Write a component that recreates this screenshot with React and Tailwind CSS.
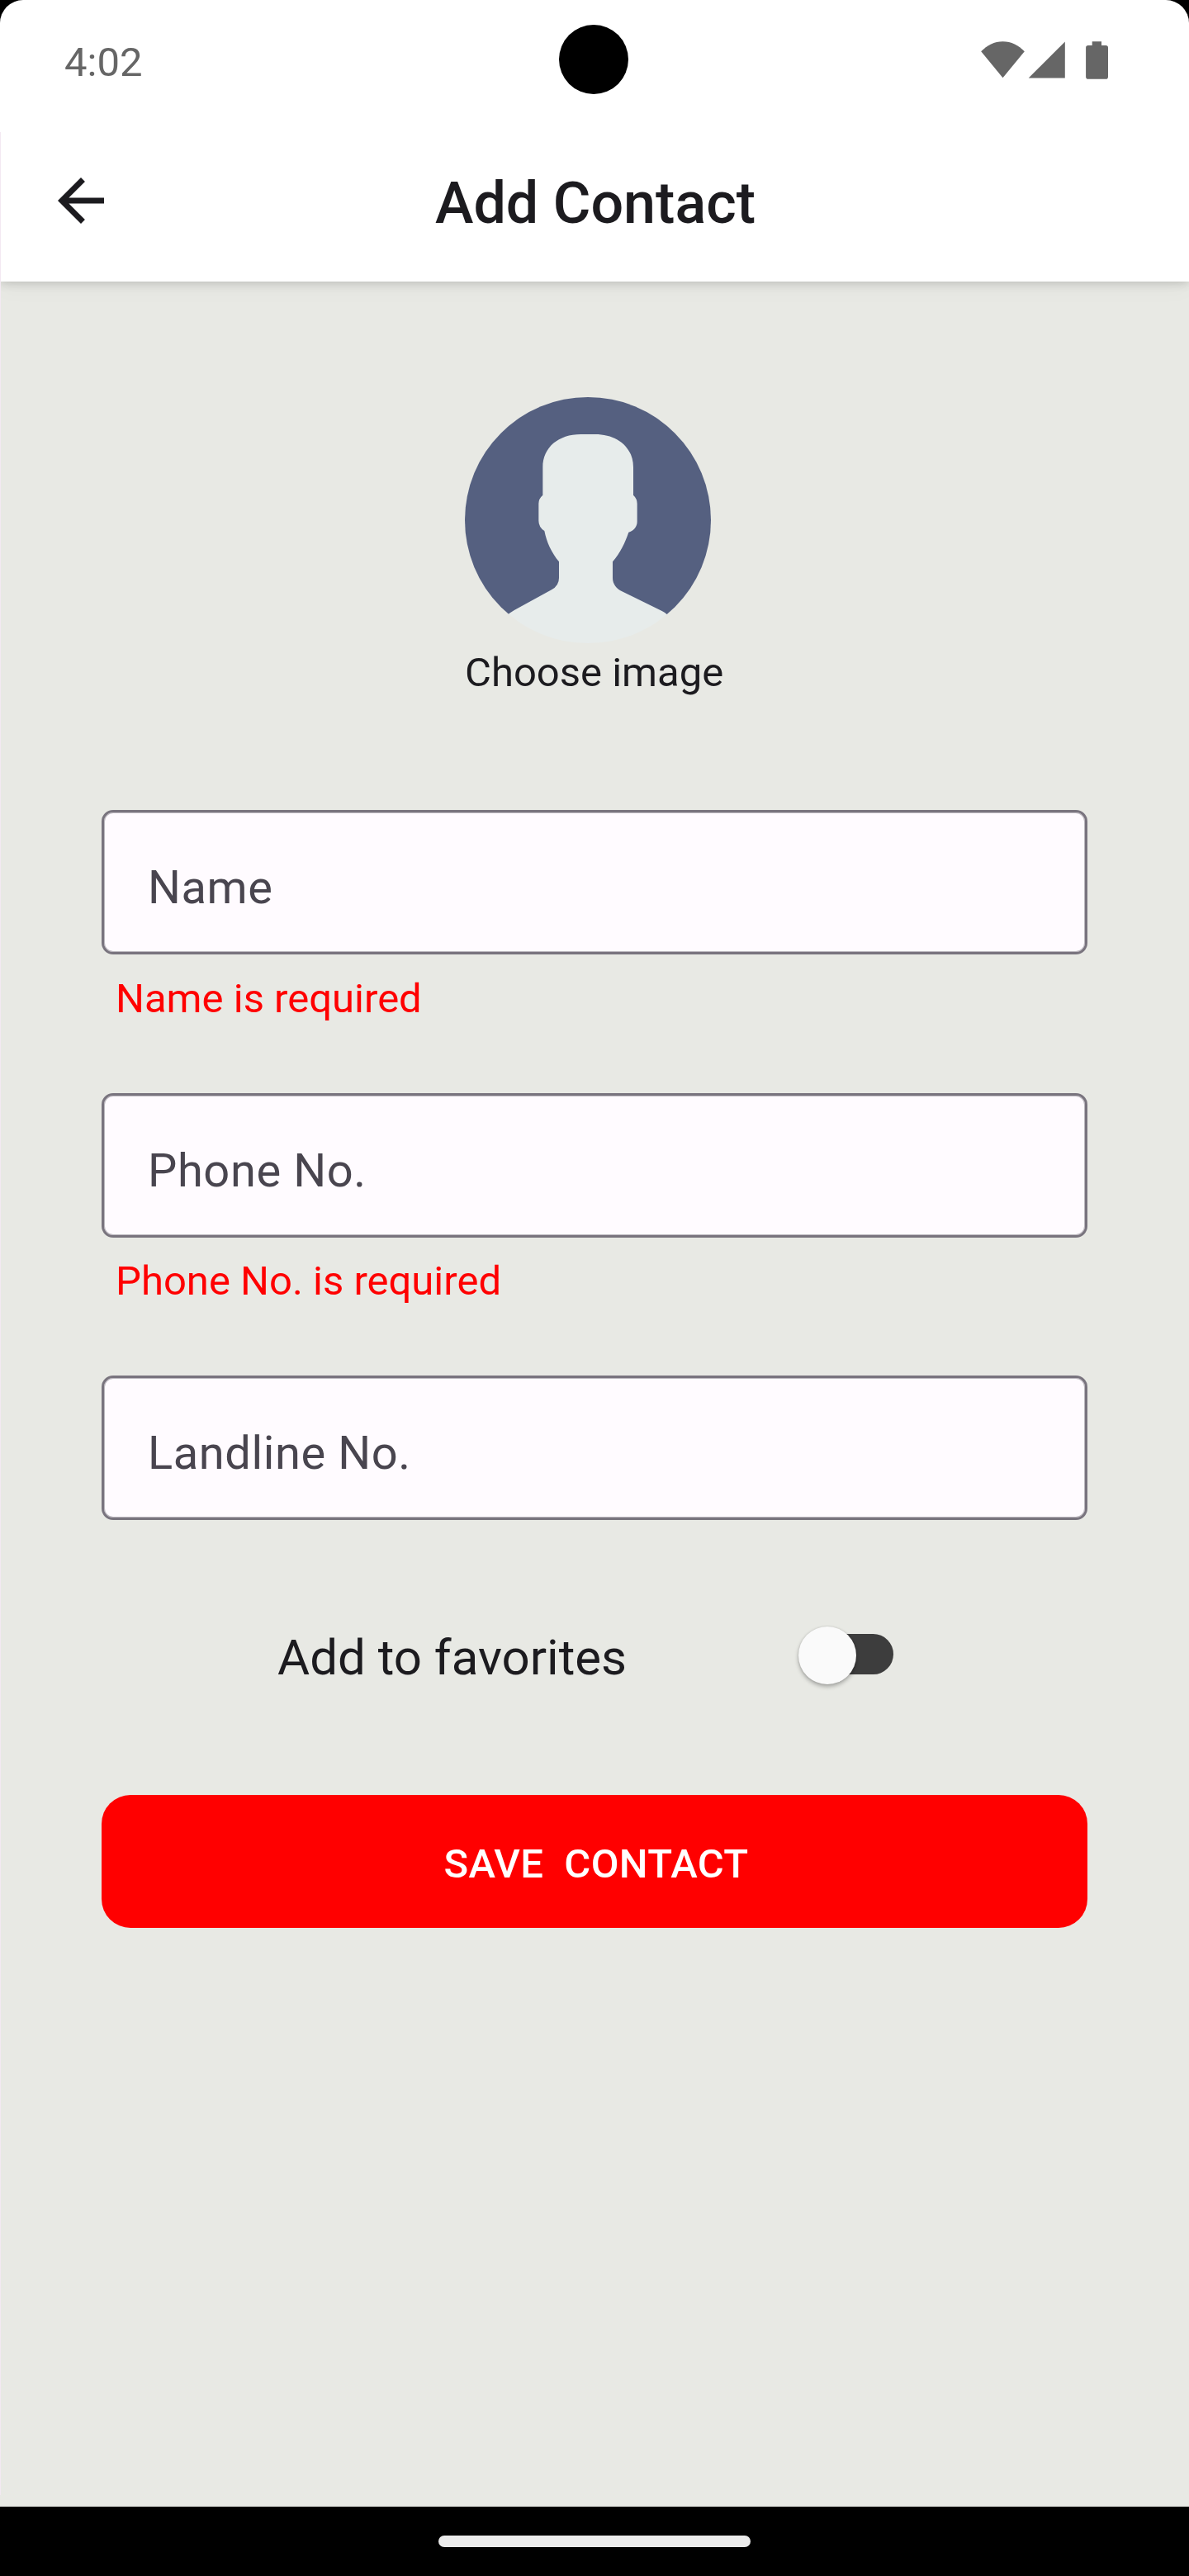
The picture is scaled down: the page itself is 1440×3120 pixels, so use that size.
function StatusBar() {
  return (
    <div className="flex h-[144px] items-start">
      <span className="mt-[47px] ml-[78px] w-[599px] text-[49px] leading-[57px] text-[#666666]">4:02</span>
      <span className="mt-[30px] size-[84px] rounded-full bg-black" />
      <svg className="mt-[48px] ml-[423px]" width="164" height="50" viewBox="1184 48 164 50" fill="#666666">
        <path d="M1214.5 94.3 1188.2 62.3C1195.4 54.7 1204.4 50.2 1214.5 50.2S1233.6 54.7 1240.8 62.3Z" />
        <path d="M1245.7 94.5 1289.8 50.4V94.5Z" />
        <path d="M1322.7 50.2H1334V55H1339.2A2.8 2.8 0 0 1 1342 57.8V92.9A2.8 2.8 0 0 1 1339.2 95.7H1317.9A2.8 2.8 0 0 1 1315.1 92.9V57.8A2.8 2.8 0 0 1 1317.9 55H1322.7Z" />
      </svg>
    </div>
  );
}

function AppBar() {
  return (
    <div className="grid h-[197px] grid-cols-[1fr_auto_1fr] items-start">
      <button className="mt-[57px] ml-[56px] size-[84px]" aria-label="Back">
        <svg width="84" height="84" viewBox="0 0 24 24" fill="#1c1b1f">
          <path d="M20 11H7.83l5.59-5.59L12 4l-8 8 8 8 1.41-1.41L7.83 13H20v-2z" />
        </svg>
      </button>
      <h1 className="mt-[61px] pl-[2px] text-[70px] leading-[82px] font-medium whitespace-nowrap text-[#1c1b1f]">Add Contact</h1>
      <span />
    </div>
  );
}

function Avatar() {
  return (
    <svg className="block size-[298px]" viewBox="69 63 894 894">
      <defs>
        <clipPath id="avatar-circle">
          <circle cx="516" cy="510" r="447" />
        </clipPath>
      </defs>
      <g clipPath="url(#avatar-circle)">
        <rect x="69" y="63" width="894" height="789" fill="#556080" />
        <path
          fill="#e7eceb"
          d="M352 419V318C352 245 410 198 490 198H542C622 198 681 245 681 318V419Q695 432 695 450V516C695 535 680 550 664 554C652 590 634 628 606 661V720C606 742 620 760 640 769L785 840Q795 845 802 851L900 957H130L229 850Q235 845 250 836L384 763Q411 748 411 720V661C384 628 366 590 358 549Q337 535 337 512V450Q337 432 352 419Z"
        />
      </g>
    </svg>
  );
}

function Field({ label }) {
  return (
    <input
      className="block h-[175px] w-full rounded-[14px] border-3 border-[#79747e] bg-[#fffbff] pt-[13px] pl-[53px] text-[56px] leading-[66px] tracking-[0.6px] text-[#1c1b1f] shadow-[inset_0_0_0_1px_#bcb8bf] outline-none placeholder:text-[#49454f] placeholder:opacity-100"
      placeholder={label}
    />
  );
}

function ErrorText({ children }) {
  return <p className="pl-[17px] text-[49px] leading-[57px] text-[#ff0000]">{children}</p>;
}

function Switch() {
  return (
    <button className="flex h-[70px] w-[116px] items-start" role="switch" aria-checked="false" aria-label="Add to favorites">
      <span className="z-10 size-[70px] shrink-0 rounded-full bg-[#fafafa] shadow-[0_3px_5px_rgba(0,0,0,0.28),0_0_3px_rgba(0,0,0,0.12)]" />
      <span className="mt-[9px] -ml-[60px] h-[49px] w-[105px] shrink-0 rounded-full bg-[#3d3d3d]" />
    </button>
  );
}

export default function App() {
  return (
    <div className="flex h-[3120px] w-[1440px] flex-col overflow-hidden bg-black font-['Roboto',sans-serif]">
      <header className="relative z-10 rounded-t-[28px] bg-white shadow-[0_2px_12px_rgba(0,0,0,0.17),0_6px_30px_rgba(0,0,0,0.04)]">
        <StatusBar />
        <AppBar />
      </header>

      <main className="h-[2695px] bg-[#e8e9e4] px-[123px] pt-[140px]">
        <div className="mx-auto flex w-[314px] flex-col gap-[7px]">
          <Avatar />
          <p className="text-[49px] leading-[57px] whitespace-nowrap text-[#1c1b1f]">Choose image</p>
        </div>

        <form className="mt-[138px] flex flex-col">
          <div className="flex flex-col gap-[25px]">
            <Field label="Name" />
            <ErrorText>Name is required</ErrorText>
          </div>
          <div className="mt-[86px] flex flex-col gap-[24px]">
            <Field label="Phone No." />
            <ErrorText>Phone No. is required</ErrorText>
          </div>
          <div className="mt-[86px]">
            <Field label="Landline No." />
          </div>

          <div className="mt-[129px] flex items-start">
            <span className="mt-[2px] ml-[213px] w-[631px] text-[60px] leading-[71px] text-[#1c1b1f]">Add to favorites</span>
            <Switch />
          </div>

          <button
            type="button"
            className="mt-[131px] flex h-[161px] items-center justify-center rounded-[35px] bg-[#ff0000] pt-[6px] pl-[4px] text-[49px] leading-[57px] font-medium tracking-[0.35px] whitespace-pre text-white"
          >
            {"SAVE  CONTACT"}
          </button>
        </form>
      </main>

      <nav className="flex h-[84px] items-start justify-center">
        <span className="mt-[35px] h-[14px] w-[378px] rounded-full bg-[#ebebeb]" />
      </nav>
      <div className="absolute top-[160px] left-0 z-20 h-[2862px] w-px bg-[#f3e9f2]" />
    </div>
  );
}
